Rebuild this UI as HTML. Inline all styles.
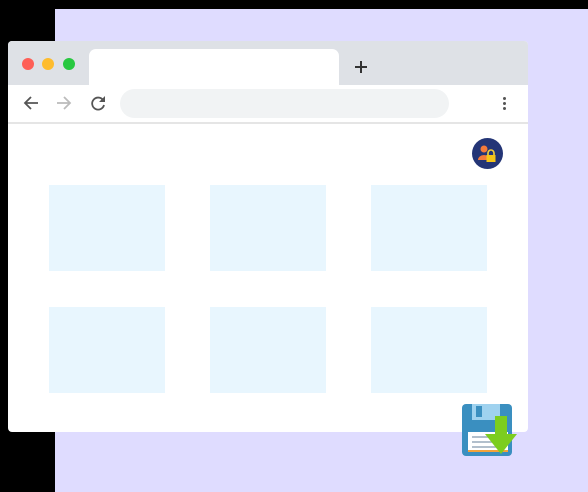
<!DOCTYPE html>
<html><head><style>
body{margin:0;width:588px;height:492px;background:#000;position:relative;overflow:hidden;font-family:"Liberation Sans",sans-serif}
div{position:absolute;box-sizing:border-box}
.t{background:#e8f6fe;width:116px;height:86px}
</style></head><body>
<div style="left:55px;top:9px;width:533px;height:483px;background:#dfdcff"></div>
<div style="left:8px;top:41px;width:520px;height:391px;background:#fff;border-radius:4px;overflow:hidden">
 <div style="left:0;top:0;width:520px;height:44px;background:#dee1e6"></div>
 <div style="left:81px;top:8px;width:250px;height:40px;background:#fff;border-radius:7px 7px 0 0"></div>
 <div style="left:14px;top:17px;width:12px;height:12px;border-radius:50%;background:#fe5f57"></div>
 <div style="left:34px;top:17px;width:12px;height:12px;border-radius:50%;background:#febc2e"></div>
 <div style="left:55px;top:17px;width:12px;height:12px;border-radius:50%;background:#28c840"></div>
 <svg style="position:absolute;left:346px;top:19px" width="14" height="14" viewBox="0 0 14 14"><path d="M7 1v12M1 7h12" stroke="#333" stroke-width="2"/></svg>
 <div style="left:112px;top:48px;width:329px;height:29px;border-radius:15px;background:#f1f3f4"></div>
 <div style="left:0;top:81px;width:520px;height:2px;background:#e5e5e5"></div>
 <svg style="position:absolute;left:14px;top:53px" width="100" height="18" viewBox="0 0 100 18">
  <path d="M16 9H3M9 3L3 9l6 6" stroke="#555" stroke-width="1.8" fill="none"/>
  <path d="M35 9h13M42 3l6 6-6 6" stroke="#bbb" stroke-width="1.8" fill="none"/>
  <path d="M81 6a6 6 0 1 0 1 5" stroke="#555" stroke-width="1.8" fill="none"/>
  <path d="M83 2v6h-6z" fill="#555"/>
 </svg>
 <div style="left:495px;top:56px;width:3px;height:3px;border-radius:50%;background:#555;box-shadow:0 5px 0 #555,0 10px 0 #555"></div>
 <div class="t" style="left:41px;top:144px"></div>
 <div class="t" style="left:202px;top:144px"></div>
 <div class="t" style="left:363px;top:144px"></div>
 <div class="t" style="left:41px;top:266px"></div>
 <div class="t" style="left:202px;top:266px"></div>
 <div class="t" style="left:363px;top:266px"></div>
 <svg style="position:absolute;left:464px;top:97px" width="31" height="31" viewBox="0 0 31 31">
  <circle cx="15.5" cy="15.5" r="15.5" fill="#243576"/>
  <circle cx="12" cy="11" r="3.5" fill="#f47a3a"/>
  <path d="M6 22a6 5 0 0 1 12 0z" fill="#f47a3a"/>
  <path d="M16 17v-2a3 3 0 0 1 6 0v2" stroke="#f5d13a" stroke-width="1.6" fill="none"/>
  <rect x="14.5" y="17" width="9" height="7" fill="#f5c518"/>
 </svg>
</div>
<svg style="position:absolute;left:460px;top:402px" width="58" height="58" viewBox="0 0 58 58">
 <rect x="2" y="2" width="50" height="52" rx="4" fill="#3a8fc0"/>
 <rect x="12" y="2" width="28" height="16" fill="#9fd2ef"/>
 <rect x="16" y="4" width="6" height="11" fill="#3a8fc0"/>
 <rect x="8" y="30" width="40" height="20" fill="#fff"/>
 <path d="M12 35h30M12 40h30M12 45h30" stroke="#9ab" stroke-width="1.5"/>
 <rect x="8" y="48" width="40" height="2" fill="#f3a33a"/>
 <path d="M35 14h12v18h10L41 52 25 32h10z" fill="#7ccd1f"/>
</svg>
</body></html>
